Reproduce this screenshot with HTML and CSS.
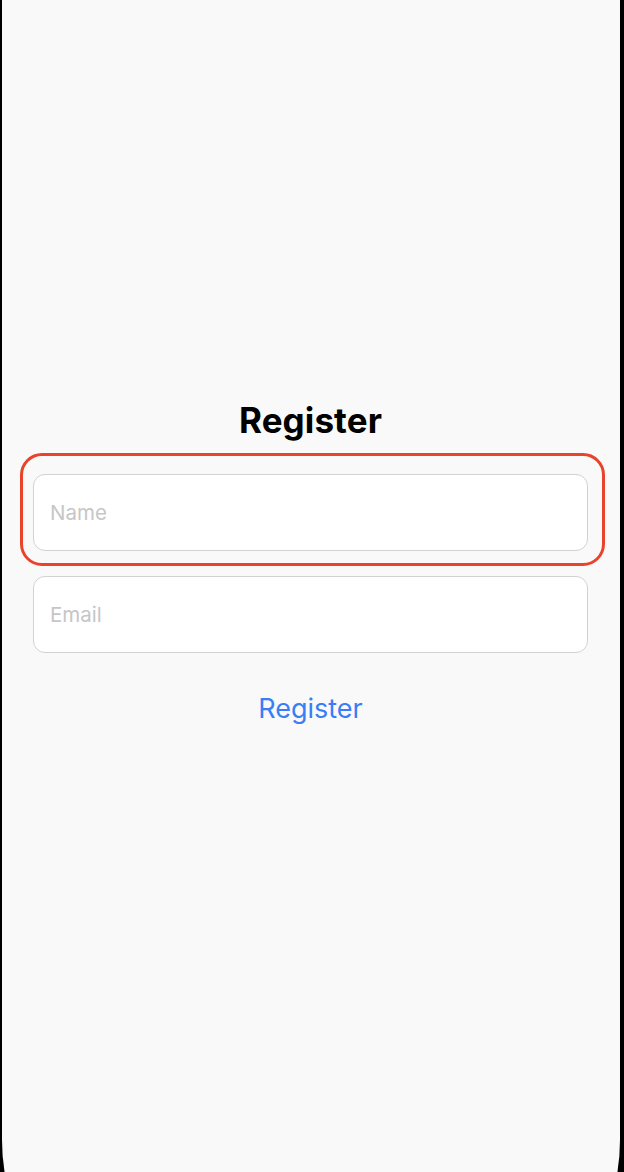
FILE: index.html
```html
<!DOCTYPE html>
<html lang="en">
<head>
<meta charset="utf-8">
<title>Register</title>
<link rel="stylesheet" href="styles.css">
</head>
<body>
<div class="screen">
  <main class="form">
    <h1 class="title">Register</h1>
    <div class="highlight">
      <input class="field" type="text" placeholder="Name">
    </div>
    <input class="field" type="email" placeholder="Email">
    <button class="link-button" type="button">Register</button>
  </main>
</div>
</body>
</html>
```
FILE: styles.css
```css
html, body {
  margin: 0;
  padding: 0;
  background: #000;
  height: 1172px;
  overflow: hidden;
}
.screen {
  margin: 0 4px 0 2px;
  height: 1340px;
  background: #f9f9f9;
  border-radius: 0 0 200px 200px;
  overflow: hidden;
  font-family: Inter, "Liberation Sans", sans-serif;
}
.form {
  display: flex;
  flex-direction: column;
  align-items: stretch;
  gap: 25px;
  padding: 399px 32px 0 31px;
}
.title {
  margin: 0 0 8px;
  text-align: center;
  font-size: 35px;
  line-height: 42px;
  font-weight: 700;
  color: #000;
  letter-spacing: 0.1px;
}
.highlight {
  position: relative;
  display: flex;
  flex-direction: column;
}
.highlight::after {
  content: "";
  position: absolute;
  top: -21px;
  left: -13px;
  right: -17px;
  bottom: -15px;
  border: 3.5px solid #e9442b;
  border-radius: 22px;
  pointer-events: none;
}
.field {
  box-sizing: border-box;
  height: 77px;
  margin: 0;
  padding: 0 16px;
  border: 1.5px solid #d2d2d2;
  border-radius: 12px;
  background: #fff;
  font-family: Inter, "Liberation Sans", sans-serif;
  font-size: 20.5px;
  color: #000;
  outline: none;
}
.field::placeholder {
  color: #c6c6c8;
}
.link-button {
  align-self: center;
  margin-top: 6px;
  padding: 0;
  border: none;
  background: none;
  font-family: Inter, "Liberation Sans", sans-serif;
  font-size: 27px;
  line-height: 50px;
  color: #3a7ef5;
}
```
